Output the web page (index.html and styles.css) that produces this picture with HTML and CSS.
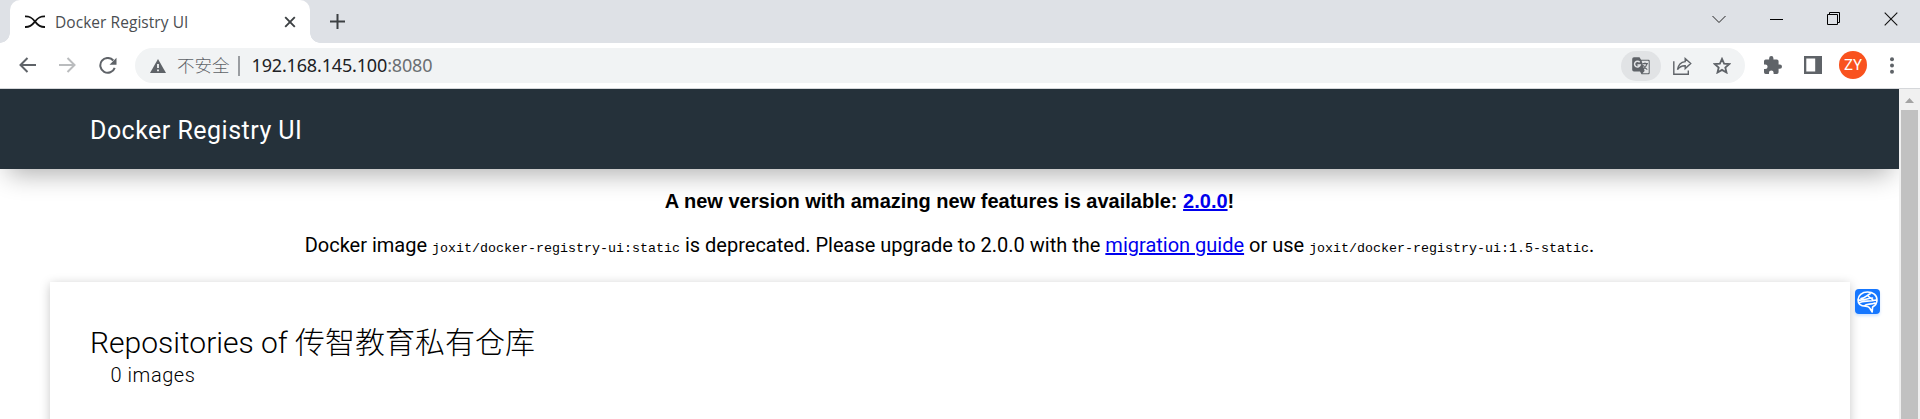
FILE: index.html
```html
<!DOCTYPE html>
<html lang="zh-CN">
<head>
<meta charset="utf-8">
<title>Docker Registry UI</title>
<link rel="stylesheet" href="styles.css">
</head>
<body>
<div class="tabstrip">
  <div class="tab">
    <svg class="favicon" width="20" height="14" viewBox="0 0 20 14" fill="none" stroke="#111"><path d="M0 1.400C6 1.200 8 4 10 6.500S14 12.300 20 12M0 12C6 12.300 8 9 10 6.500S14 1.200 20 1.400" stroke-width="1.800"/></svg>
    <span class="tab-title">Docker Registry UI</span>
    <svg class="tab-close" width="12" height="12" viewBox="0 0 12 12" stroke="#3c4043" stroke-width="1.900"><path d="M1.200 1.200l9.600 9.600M10.800 1.200l-9.600 9.600"/></svg>
  </div>
  <svg class="new-tab" width="15" height="15" viewBox="0 0 15 15" stroke="#3c4043" stroke-width="2"><path d="M7.500 0v15M0 7.500h15"/></svg>
  <div class="window-controls">
    <svg width="14" height="14" viewBox="0 0 14 14" fill="none" stroke="#222"><path d="M.5 4l6.500 6.500L13.500 4"/></svg>
    <svg width="13" height="14" viewBox="0 0 13 14" stroke="#000"><path d="M0 7.500h13"/></svg>
    <svg width="13" height="13" viewBox="0 0 13 13" fill="none" stroke="#000"><path d="M.5 2.500h10v10h-10zM2.500 2.500v-2h10v10h-2"/></svg>
    <svg width="14" height="14" viewBox="0 0 14 14" stroke="#111" stroke-width="1.100"><path d="M.7.7l12.600 12.600M13.300.7L.7 13.300"/></svg>
  </div>
</div>
<div class="toolbar">
  <div class="nav">
    <svg width="17" height="16" viewBox="0 0 17 16" fill="none" stroke="#5f6368" stroke-width="2"><path d="M17 8H1.500M8.500 1L1.500 8l7 7"/></svg>
    <svg width="17" height="16" viewBox="0 0 17 16" fill="none" stroke="#babcbe" stroke-width="2"><path d="M0 8h15.500M8.500 1l7 7-7 7"/></svg>
    <svg width="18" height="17" viewBox="0 0 18 17"><path d="M14.300 3.500A7.400 7.400 0 1 0 15.700 10.800" fill="none" stroke="#5f6368" stroke-width="2"/><path d="M17.500.8v7h-7z" fill="#5f6368"/></svg>
  </div>
  <div class="omnibox">
    <svg class="warning" width="16" height="14" viewBox="0 0 16 14"><path d="M8 0l8 14H0z" fill="#5f6368"/><path d="M8 5v4M8 10.400v1.800" stroke="#f1f3f4" stroke-width="1.800"/></svg>
    <span class="insecure">不安全</span>
    <span class="divider"></span>
    <span class="url">192.168.145.100<span class="port">:8080</span></span>
    <div class="page-actions">
      <span class="translate">
        <svg width="18" height="18" viewBox="0 0 18 18"><path d="M2 .2h5.500l1.600 2.500H16.500q1.200 0 1.200 1.200v12.200q0 1.200-1.200 1.200H9.500L8 14.500H2Q.2 14.500.2 12.800V2Q.2.2 2 .2z" fill="#5f6368"/><path d="M9.600 3.700h6.300q.8 0 .8.800v11q0 .8-.8.800h-5.400l2.100-2.300z" fill="#e3e5e7"/><path d="M7.700 5.200A2.900 2.900 0 1 0 8.200 8H5.400" fill="none" stroke="#e3e5e7" stroke-width="1.500"/><path d="M10.400 6.600h5.500M13 5.400v1.200M15 6.600q-.8 3.600-4 5.600M11.300 8.200q1.300 2.800 4 4.400" fill="none" stroke="#5f6368" stroke-width="1.100"/></svg>
      </span>
      <svg width="19" height="18" viewBox="0 0 19 18" fill="none" stroke="#5f6368" stroke-width="1.400"><path d="M.8 4.300v12.900h14.500v-3.600M12.200 1.600l5.500 5-5.500 5V8.700Q7.200 8.500 4.500 12.600 5.600 5.400 12.200 4.600z"/></svg>
      <svg width="18" height="17" viewBox="0 0 18 17" fill="none" stroke="#5f6368" stroke-width="1.800"><path d="M9 1.900l2.100 4.700 5.100.5-3.900 3.400 1.200 5L9 12.900l-4.500 2.600 1.200-5L1.800 7.100l5.100-.5z"/></svg>
    </div>
  </div>
  <div class="extensions">
    <svg width="18" height="18" viewBox="2 1 21 21"><path fill="#5f6368" d="M20.500 11H19V7a2 2 0 0 0-2-2h-4V3.500a2.500 2.500 0 0 0-5 0V5H4a2 2 0 0 0-2 2v3.800h1.500a2.700 2.700 0 0 1 0 5.400H2V20a2 2 0 0 0 2 2h3.800v-1.500a2.700 2.700 0 0 1 5.400 0V22H17a2 2 0 0 0 2-2v-4h1.500a2.500 2.500 0 0 0 0-5z"/></svg>
    <svg width="18" height="18" viewBox="0 0 18 18"><path fill="#5f6368" fill-rule="evenodd" d="M0 0h18v18H0zM2.300 2.600v12.800h8.900V2.600z"/></svg>
    <span class="avatar">ZY</span>
    <svg width="4" height="17" viewBox="0 0 4 17" fill="#5f6368"><circle cx="2" cy="2.200" r="2"/><circle cx="2" cy="8.500" r="2"/><circle cx="2" cy="14.800" r="2"/></svg>
  </div>
</div>
<div class="viewport">
  <div class="page">
    <header class="header">Docker Registry UI</header>
    <main class="content">
      <p class="notice notice-title">A new version with amazing new features is available: <a href="#">2.0.0</a>!</p>
      <p class="notice notice-text">Docker image <code>joxit/docker-registry-ui:static</code> is deprecated. Please upgrade to 2.0.0 with the <a href="#">migration guide</a> or use <code>joxit/docker-registry-ui:1.5-static</code>.</p>
      <section class="card">
        <h2 class="card-title">Repositories of <span class="registry">传智教育私有仓库</span></h2>
        <div class="count">0 images</div>
      </section>
    </main>
    <div class="assistant">
      <svg width="21" height="22" viewBox="0 0 21 22" fill="none" stroke="#fff" stroke-width="1.600" stroke-linecap="round" stroke-linejoin="round"><path d="M10.500 1C5 1 1 4.500 1 8.700c0 4.200 3 6.500 7.500 6.500 2 0 3.500.2 4.500 2.300l2.200 3.500.4-5c2.700-1.400 4.400-4 4.400-7C20 4 16 1 10.500 1zM4 7.500c4 0 5.500-3 9.500-5M1.500 9c6 1 9-2 14-2M2 12c4-3 9-1 17-3M7 15c3-3 6-1 11-3M11 5l5 4"/></svg>
    </div>
  </div>
  <div class="scrollbar">
    <svg width="9" height="5" viewBox="0 0 9 5"><path d="M4.500 0L9 5H0z" fill="#a3a3a3"/></svg>
    <div class="thumb"></div>
  </div>
</div>
</body>
</html>
```
FILE: styles.css
```css
* { box-sizing: border-box; }
body { margin: 0; width: 1920px; height: 419px; overflow: hidden; display: flex; flex-direction: column; background: #fff; font-family: Roboto, "Noto Sans CJK SC", sans-serif; }
svg { display: block; flex: none; }

.tabstrip { height: 43px; flex: none; display: flex; align-items: center; background: #dee1e6; padding-left: 10px; }
.tab { position: relative; width: 300px; height: 43px; display: flex; align-items: center; padding: 0 14px 0 15px; background: #fff; border-radius: 10px 10px 0 0; }
.tab::before, .tab::after { content: ""; position: absolute; bottom: 0; width: 10px; height: 10px; }
.tab::before { left: -10px; background: radial-gradient(circle at 0 0, transparent 9.5px, #fff 10px); }
.tab::after { right: -10px; background: radial-gradient(circle at 100% 0, transparent 9.5px, #fff 10px); }
.tab-title { margin-left: 10px; padding-top: 1px; font-family: "Open Sans", "Noto Sans", sans-serif; font-size: 15.5px; letter-spacing: .05px; color: #4a4d51; white-space: nowrap; }
.tab-close { margin-left: auto; }
.new-tab { margin-left: 20px; }
.window-controls { margin-left: auto; display: flex; align-items: center; gap: 44px; padding: 0 22px 6px 0; }

.toolbar { height: 46px; flex: none; display: flex; align-items: center; padding-left: 19px; border-bottom: 1px solid #d5d7da; }
.nav { display: flex; align-items: center; gap: 23px; padding-bottom: 1px; }
.omnibox { width: 1610px; height: 35px; margin-left: 18px; border-radius: 18px; display: flex; align-items: center; padding-left: 15px; background: #f1f3f4; font-size: 18px; }
.insecure { margin-left: 11px; padding-bottom: 2px; font-family: "Noto Sans CJK SC", sans-serif; font-weight: 300; font-size: 17.5px; color: #5f6368; }
.divider { width: 2px; height: 20px; margin-left: 8px; background: #9a9da1; }
.url { margin-left: 12px; padding-bottom: 2px; font-family: "Noto Sans", sans-serif; letter-spacing: -.16px; color: #202124; white-space: nowrap; }
.port { color: #6b6f73; }
.page-actions { margin-left: auto; display: flex; align-items: center; gap: 21px; padding-right: 14px; }
.translate { width: 40px; height: 30px; margin-right: -9px; display: flex; align-items: center; justify-content: center; border-radius: 15px; background: #e1e3e5; }
.extensions { display: flex; align-items: center; gap: 22px; margin-left: 19px; padding-bottom: 1px; }
.avatar { width: 28px; height: 28px; margin: 0 1px 0 -5px; border-radius: 50%; display: flex; align-items: center; justify-content: center; background: #f9521e; color: #fff; font-size: 15px; }

.viewport { flex: 1; min-height: 0; display: flex; }
.page { position: relative; width: 1899px; overflow: hidden; }
.header { position: relative; height: 80px; display: flex; align-items: center; padding: 2px 0 0 90px; background: #25313a; color: #fff; font-size: 25px; letter-spacing: .48px; box-shadow: 0 13px 26px -8px rgba(0, 0, 0, .32); }
.content { padding: 0 49px; }
.notice { margin: 0; text-align: center; font-size: 20px; line-height: 30px; color: #000; white-space: nowrap; }
.notice-title { margin-top: 17px; font-weight: 700; font-family: "Liberation Sans", Arial, sans-serif; }
.notice-text { margin-top: 14px; }
.notice a { color: #00e; text-decoration: underline; }
.notice code { font-family: "Liberation Mono", monospace; font-size: 13.33px; }
.card { height: 200px; margin: 18px 0 0 1px; padding: 40px; background: #fff; box-shadow: 0 2px 10px rgba(0, 0, 0, .22); }
.card-title { margin: 0; font-size: 30px; line-height: 42px; font-weight: 300; white-space: nowrap; }
.registry { font-family: "Noto Sans CJK SC", sans-serif; font-size: 30px; line-height: 1; }
.count { margin-left: 20.5px; font-size: 20px; line-height: 22px; font-weight: 300; letter-spacing: .55px; }
.assistant { position: absolute; left: 1855px; top: 200px; width: 25px; height: 25px; display: flex; align-items: center; justify-content: center; border-radius: 4px; background: #1677ff; box-shadow: 0 2px 3px rgba(22, 119, 255, .2); }
.scrollbar { width: 21px; display: flex; flex-direction: column; align-items: center; padding-top: 9px; background: #f0f0f0; }
.thumb { width: 17px; flex: 1; margin-top: 7px; background: #c1c1c1; }
```
